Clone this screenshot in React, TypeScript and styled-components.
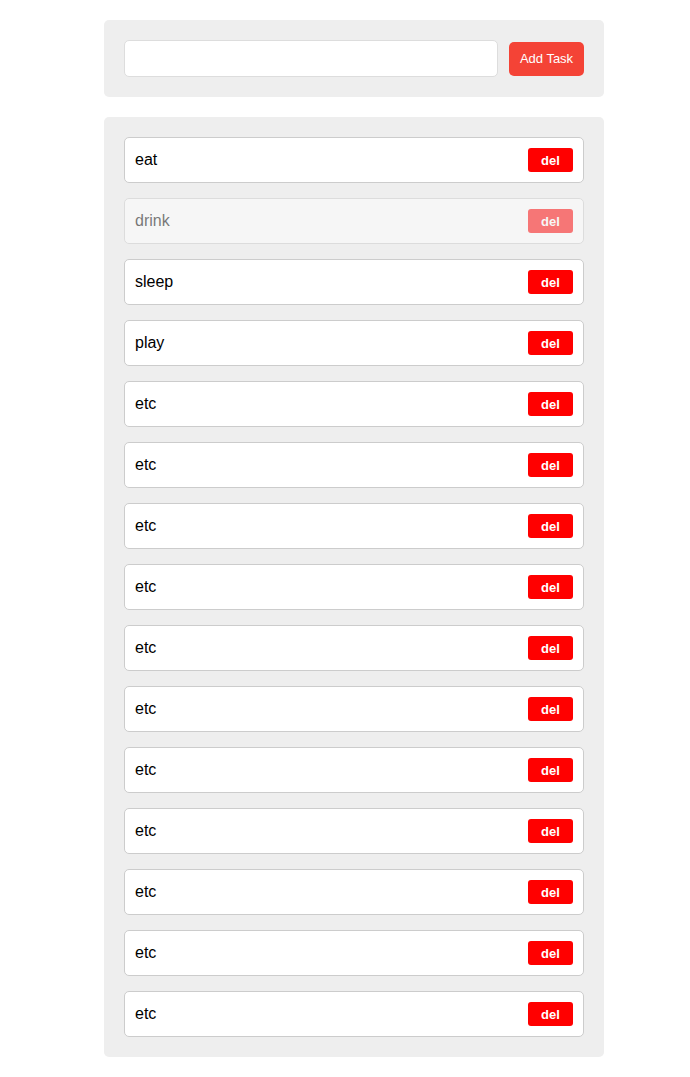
import React, { useState } from 'react';
import styled, { createGlobalStyle } from 'styled-components';

const GlobalStyle = createGlobalStyle`
  body {
    margin: 0;
    background: #fff;
    font-family: "Liberation Sans", Arial, sans-serif;
  }
`;

const Page = styled.div`
  display: flex;
  flex-direction: column;
  gap: 20px;
  width: 500px;
  padding: 20px 0;
  margin-left: 104px;
`;

const Panel = styled.div`
  background: #eeeeee;
  border-radius: 5px;
  padding: 20px;
`;

const Form = styled.form`
  display: flex;
  align-items: center;
  gap: 11px;
`;

const Input = styled.input`
  flex: 1;
  height: 37px;
  box-sizing: border-box;
  border: 1px solid #dddddd;
  border-radius: 5px;
  background: #fff;
  padding: 0 10px;
  font-size: 14px;
  font-family: inherit;
  outline: none;
`;

const AddButton = styled.button`
  height: 34px;
  width: 75px;
  border: none;
  border-radius: 5px;
  background: #f44336;
  color: #fff;
  font-size: 13px;
  font-family: "Liberation Sans", Arial, sans-serif;
  padding: 0;
  cursor: pointer;
`;

const List = styled.ul`
  list-style: none;
  margin: 0;
  padding: 0;
  display: flex;
  flex-direction: column;
  gap: 15px;
`;

const Item = styled.li<{ $done: boolean }>`
  display: flex;
  align-items: center;
  justify-content: space-between;
  height: 46px;
  box-sizing: border-box;
  padding: 0 10px;
  background: #fff;
  border: 1px solid #cccccc;
  border-radius: 5px;
  font-size: 16px;
  color: #000;
  opacity: ${p => (p.$done ? 0.5 : 1)};
`;

const DelButton = styled.button`
  width: 45px;
  height: 24px;
  border: none;
  border-radius: 3px;
  background: #ff0000;
  color: #fff;
  font-weight: bold;
  font-size: 13px;
  font-family: "Liberation Sans", Arial, sans-serif;
  padding: 0;
  cursor: pointer;
`;

const initial = [
  { text: 'eat', done: false },
  { text: 'drink', done: true },
  { text: 'sleep', done: false },
  { text: 'play', done: false },
  ...Array.from({ length: 11 }, () => ({ text: 'etc', done: false })),
];

export default function App() {
  const [tasks, setTasks] = useState(initial);
  const [value, setValue] = useState('');

  const add = (e: React.FormEvent) => {
    e.preventDefault();
    if (!value.trim()) return;
    setTasks([...tasks, { text: value.trim(), done: false }]);
    setValue('');
  };

  return (
    <>
      <GlobalStyle />
      <Page>
        <Panel>
          <Form onSubmit={add}>
            <Input value={value} onChange={e => setValue(e.target.value)} />
            <AddButton type="submit">Add Task</AddButton>
          </Form>
        </Panel>
        <Panel>
          <List>
            {tasks.map((t, i) => (
              <Item key={i} $done={t.done}>
                <span>{t.text}</span>
                <DelButton onClick={() => setTasks(tasks.filter((_, j) => j !== i))}>del</DelButton>
              </Item>
            ))}
          </List>
        </Panel>
      </Page>
    </>
  );
}
